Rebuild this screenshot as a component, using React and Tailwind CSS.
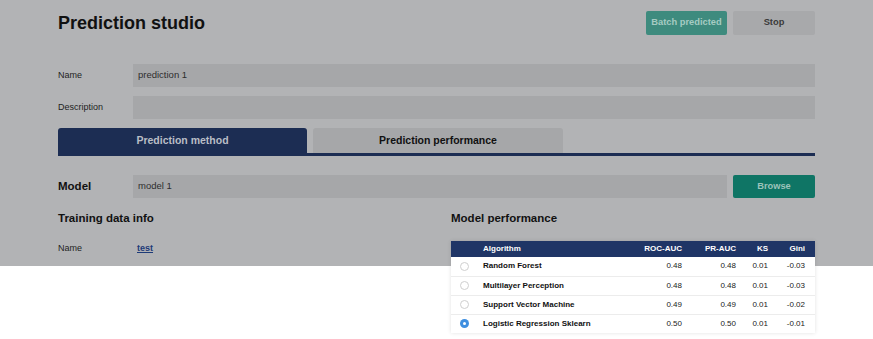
const rows = [
  { name: "Random Forest", roc: "0.48", pr: "0.48", ks: "0.01", gini: "-0.03" },
  { name: "Multilayer Perception", roc: "0.48", pr: "0.48", ks: "0.01", gini: "-0.03" },
  { name: "Support Vector Machine", roc: "0.49", pr: "0.49", ks: "0.01", gini: "-0.02" },
  { name: "Logistic Regression Sklearn", roc: "0.50", pr: "0.50", ks: "0.01", gini: "-0.01", selected: true },
]

function Radio({ on }) {
  if (on) {
    return (
      <span className="ml-[9px] flex h-[9px] w-[9px] items-center justify-center rounded-full bg-[#3f8fe0]">
        <span className="h-[3px] w-[3px] rounded-full bg-white"></span>
      </span>
    )
  }
  return <span className="ml-[9px] block h-[9px] w-[9px] rounded-full border border-[#cfcfcf] bg-white"></span>
}

function Field({ label, value }) {
  return (
    <div className="flex h-[23px] items-center">
      <div className="w-[75px] text-[9px] text-[#1e1e1e]">{label}</div>
      <div className="flex h-full flex-1 items-center bg-[#a6a7a9] pl-[5px] text-[9.5px] text-[#2e2e2e]">{value}</div>
    </div>
  )
}

export default function App() {
  return (
    <div className="min-h-[339px] bg-[linear-gradient(to_bottom,#b2b3b5_266px,#ffffff_266px)] font-['Liberation_Sans',Arial,sans-serif]">
      <div className="mx-auto w-[757px]">
        {/* header */}
        <div className="flex h-[46px] items-center justify-between">
          <h1 className="text-[18px] font-bold text-[#111]">Prediction studio</h1>
          <div className="flex gap-[6px]">
            <button type="button" className="h-[24px] w-[81px] rounded-[2px] bg-[#3e8b7e] text-[9.3px] font-bold text-[#a6cbc3]">Batch predicted</button>
            <button type="button" className="h-[24px] w-[82px] rounded-[2px] bg-[#a8a9ab] text-[9.3px] font-bold text-[#3a3a3a]">Stop</button>
          </div>
        </div>

        <div className="mt-[18px] space-y-[9px]">
          <Field label="Name" value="prediction 1" />
          <Field label="Description" value="" />
        </div>

        {/* tabs */}
        <div className="mt-[9px] flex gap-[6px] border-b-[3px] border-[#1c2d53]">
          <div className="flex h-[25px] w-[249px] items-center justify-center rounded-t-[3px] bg-[#1c2d53] text-[10.5px] font-bold text-[#b9bdc6]">Prediction method</div>
          <div className="flex h-[25px] w-[250px] items-center justify-center rounded-t-[3px] bg-[#a6a7a9] text-[10.5px] font-bold text-[#111]">Prediction performance</div>
        </div>

        {/* model */}
        <div className="mt-[19px] flex h-[23px] items-center">
          <div className="w-[75px] text-[11.5px] font-bold text-[#111]">Model</div>
          <div className="flex h-full flex-1 items-center bg-[#a6a7a9] pl-[5px] text-[9.5px] text-[#2e2e2e]">model 1</div>
          <button type="button" className="ml-[6px] h-full w-[82px] rounded-[2px] bg-[#0f7565] text-[9.3px] font-bold text-[#9cc3bb]">Browse</button>
        </div>

        <div className="mt-[13px] grid grid-cols-[393px_364px]">
          <div>
            <h2 className="text-[11.5px] leading-[14px] font-bold text-[#111]">Training data info</h2>
            <div className="mt-[17px] flex h-[14px] items-center text-[9px]">
              <span className="w-[79px] text-[#1e1e1e]">Name</span>
              <a href="#" className="font-bold text-[#1d3b78] underline">test</a>
            </div>
          </div>
          <div>
            <h2 className="text-[11.5px] leading-[14px] font-bold text-[#111]">Model performance</h2>
            <table className="mt-[16px] w-[364px] table-fixed border-collapse bg-white text-[8px] text-[#222] shadow-[0_0_4px_rgba(0,0,0,0.12)]">
              <colgroup>
                <col className="w-[32px]" />
                <col className="w-[149px]" />
                <col className="w-[60px]" />
                <col className="w-[54px]" />
                <col className="w-[32px]" />
                <col className="w-[37px]" />
              </colgroup>
              <thead>
                <tr className="h-[16px] bg-[#1f3566] font-bold text-white">
                  <th></th>
                  <th className="text-left">Algorithm</th>
                  <th className="pr-[10px] text-right">ROC-AUC</th>
                  <th className="pr-[10px] text-right">PR-AUC</th>
                  <th className="pr-[10px] text-right">KS</th>
                  <th className="pr-[10px] text-right">Gini</th>
                </tr>
              </thead>
              <tbody>
                {rows.map((r, i) => (
                  <tr key={r.name} className={i === 0 ? "h-[19px]" : "h-[19px] border-t border-[#ececec]"}>
                    <td><Radio on={r.selected} /></td>
                    <td className="font-bold text-[#111]">{r.name}</td>
                    <td className="pr-[10px] text-right">{r.roc}</td>
                    <td className="pr-[10px] text-right">{r.pr}</td>
                    <td className="pr-[10px] text-right">{r.ks}</td>
                    <td className="pr-[10px] text-right">{r.gini}</td>
                  </tr>
                ))}
              </tbody>
            </table>
          </div>
        </div>
      </div>
    </div>
  )
}
